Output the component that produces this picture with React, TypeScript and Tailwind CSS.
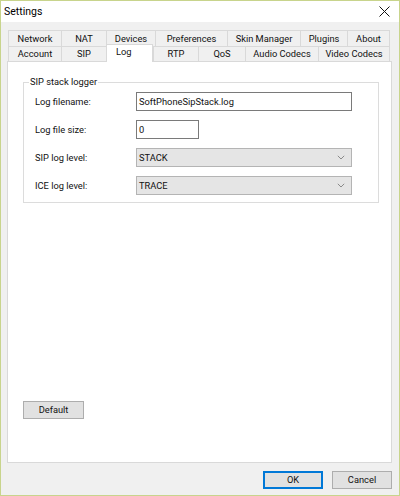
import React from "react";

const topRow: [string, number][] = [
  ["Network", 53],
  ["NAT", 45],
  ["Devices", 49],
  ["Preferences", 72],
  ["Skin Manager", 73],
  ["Plugins", 47],
  ["About", 43],
];

const bottomRow: [string, number][] = [
  ["Account", 53],
  ["SIP", 45],
  ["Log", 47],
  ["RTP", 45],
  ["QoS", 47],
  ["Audio Codecs", 73],
  ["Video Codecs", 72],
];

const active = "Log";

function Tab({ label, width, last }: { label: string; width: number; last: boolean }) {
  const selected = label === active;
  if (selected) {
    return (
      <div
        style={{ width }}
        className="relative z-10 -mb-px flex h-[18px] shrink-0 items-start border-x border-t border-[#d9d9d9] bg-white pl-[9px] pt-[1px]"
      >
        {label}
      </div>
    );
  }
  return (
    <div
      style={{ width }}
      className={
        "flex h-full shrink-0 items-center justify-center border-l border-t border-[#d9d9d9] bg-[#f0f0f0] " +
        (last ? "border-r" : "")
      }
    >
      {label}
    </div>
  );
}

function Chevron() {
  return (
    <svg width="8" height="5" viewBox="0 0 8 5" className="text-[#8a8a8a]">
      <path d="M0.8 0.8 L4 4 L7.2 0.8" fill="none" stroke="currentColor" strokeWidth="1" />
    </svg>
  );
}

function Field({ label, children }: { label: string; children: React.ReactNode }) {
  return (
    <div className="flex h-[19px] items-center">
      <div className="w-[101px] shrink-0">{label}</div>
      {children}
    </div>
  );
}

function Combo({ value }: { value: string }) {
  return (
    <div className="flex h-full w-[216px] items-center justify-between border border-[#b4b4b4] bg-[#e5e5e5] pl-[2px] pr-[6px]">
      <span>{value}</span>
      <Chevron />
    </div>
  );
}

export default function App() {
  return (
    <div
      className="flex h-[496px] w-[400px] flex-col border border-[#c8d48c] bg-[#f0f0f0] text-[9.3px] leading-[12px] text-[#111]"
      style={{ fontFamily: "Roboto, 'Noto Sans', Arial, sans-serif" }}
    >
      {/* title bar */}
      <div className="flex h-[21px] shrink-0 items-center justify-between bg-white pl-[3px] pr-[9px]">
        <span className="text-[10.5px] text-black">Settings</span>
        <svg width="11" height="11" viewBox="0 0 11 11">
          <path d="M0.5 0.5 L10.5 10.5 M10.5 0.5 L0.5 10.5" stroke="#111" strokeWidth="1" />
        </svg>
      </div>

      <div className="flex flex-1 flex-col pl-[6px] pr-[7px] pt-[8px]">
        {/* tab strip */}
        <div className="ml-px flex h-[16px]">
          {topRow.map(([l, w], i) => (
            <Tab key={l} label={l} width={w} last={i === topRow.length - 1} />
          ))}
        </div>
        <div className="ml-px flex h-[15px] items-end">
          {bottomRow.map(([l, w], i) => (
            <Tab key={l} label={l} width={w} last={i === bottomRow.length - 1} />
          ))}
        </div>

        {/* page */}
        <div className="flex h-[402px] flex-col border border-[#d9d9d9] bg-white pl-[15px] pt-[20px]">
          <div className="relative flex w-[356px] flex-col gap-[9px] border border-[#dcdcdc] pb-[7px] pl-[11px] pt-[9px]">
            <span className="absolute left-[5px] top-[-7px] bg-white px-px">SIP stack logger</span>
            <Field label="Log filename:">
              <div className="flex h-full w-[216px] items-center border border-[#7a7a7a] bg-white pl-[2px]">
                SoftPhoneSipStack.log
              </div>
            </Field>
            <Field label="Log file size:">
              <div className="flex h-full w-[63px] items-center border border-[#7a7a7a] bg-white pl-[2px]">0</div>
            </Field>
            <Field label="SIP log level:">
              <Combo value="STACK" />
            </Field>
            <Field label="ICE log level:">
              <Combo value="TRACE" />
            </Field>
          </div>

          <div className="mb-[43px] mt-auto flex h-[18px] w-[61px] items-center justify-center border border-[#adadad] bg-[#e1e1e1]">
            Default
          </div>
        </div>

        {/* dialog buttons */}
        <div className="mt-[8px] flex justify-end gap-[9px]">
          <div className="flex h-[18px] w-[60px] items-center justify-center border-2 border-[#0078d7] bg-[#e1e1e1]">
            OK
          </div>
          <div className="flex h-[18px] w-[60px] items-center justify-center border border-[#adadad] bg-[#e1e1e1]">
            Cancel
          </div>
        </div>
      </div>
    </div>
  );
}
